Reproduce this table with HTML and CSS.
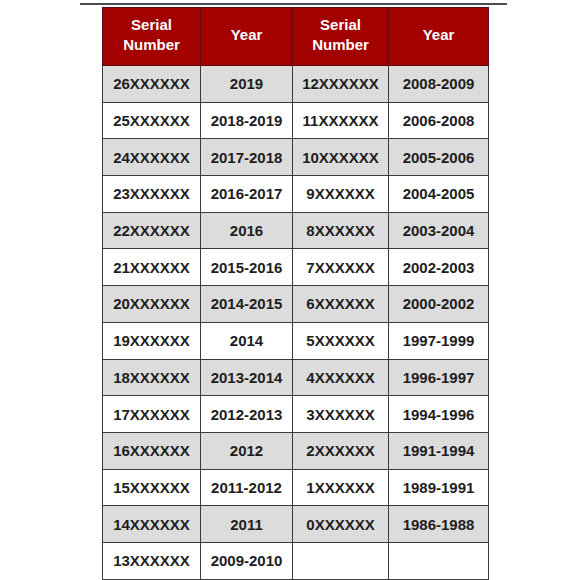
FILE: index.html
```html
<!DOCTYPE html>
<html>
<head>
<meta charset="utf-8">
<link rel="stylesheet" href="styles.css">
</head>
<body>
<div class="page">
  <div class="rule"></div>
  <table class="serials">
    <colgroup>
      <col class="c1"><col class="c2"><col class="c3"><col class="c4">
    </colgroup>
    <thead>
      <tr><th>Serial<br>Number</th><th>Year</th><th>Serial<br>Number</th><th>Year</th></tr>
    </thead>
    <tbody>
      <tr class="alt"><td>26XXXXXX</td><td>2019</td><td>12XXXXXX</td><td>2008-2009</td></tr>
      <tr><td>25XXXXXX</td><td>2018-2019</td><td>11XXXXXX</td><td>2006-2008</td></tr>
      <tr class="alt"><td>24XXXXXX</td><td>2017-2018</td><td>10XXXXXX</td><td>2005-2006</td></tr>
      <tr><td>23XXXXXX</td><td>2016-2017</td><td>9XXXXXX</td><td>2004-2005</td></tr>
      <tr class="alt"><td>22XXXXXX</td><td>2016</td><td>8XXXXXX</td><td>2003-2004</td></tr>
      <tr><td>21XXXXXX</td><td>2015-2016</td><td>7XXXXXX</td><td>2002-2003</td></tr>
      <tr class="alt"><td>20XXXXXX</td><td>2014-2015</td><td>6XXXXXX</td><td>2000-2002</td></tr>
      <tr><td>19XXXXXX</td><td>2014</td><td>5XXXXXX</td><td>1997-1999</td></tr>
      <tr class="alt"><td>18XXXXXX</td><td>2013-2014</td><td>4XXXXXX</td><td>1996-1997</td></tr>
      <tr><td>17XXXXXX</td><td>2012-2013</td><td>3XXXXXX</td><td>1994-1996</td></tr>
      <tr class="alt"><td>16XXXXXX</td><td>2012</td><td>2XXXXXX</td><td>1991-1994</td></tr>
      <tr><td>15XXXXXX</td><td>2011-2012</td><td>1XXXXXX</td><td>1989-1991</td></tr>
      <tr class="alt"><td>14XXXXXX</td><td>2011</td><td>0XXXXXX</td><td>1986-1988</td></tr>
      <tr><td>13XXXXXX</td><td>2009-2010</td><td></td><td></td></tr>
    </tbody>
  </table>
</div>
</body>
</html>
```
FILE: styles.css
```css
html, body {
  margin: 0;
  padding: 0;
  background: #ffffff;
}
.page {
  width: 580px;
  height: 580px;
  overflow: hidden;
  padding-top: 3px;
  box-sizing: border-box;
  font-family: "Liberation Sans", Arial, sans-serif;
}
.rule {
  margin-left: 80px;
  width: 427px;
  height: 2px;
  background: #4a4a4a;
}
.serials {
  margin-left: 102px;
  margin-top: 2px;
  border-collapse: collapse;
  table-layout: fixed;
  width: 386px;
}
.c1 { width: 98px; }
.c2 { width: 92px; }
.c3 { width: 96px; }
.c4 { width: 100px; }
.serials th,
.serials td {
  border: 1px solid #3a3a3a;
  text-align: center;
  font-weight: bold;
  font-size: 15px;
  color: #1e1e1e;
  padding: 0;
}
.serials th {
  background: #a30000;
  color: #ffffff;
  height: 54px;
  padding-bottom: 3px;
  line-height: 20px;
  border-color: #5a1010;
}
.serials td {
  height: 35.7px;
}
.serials tr.alt td {
  background: #dcdcdc;
}
```
